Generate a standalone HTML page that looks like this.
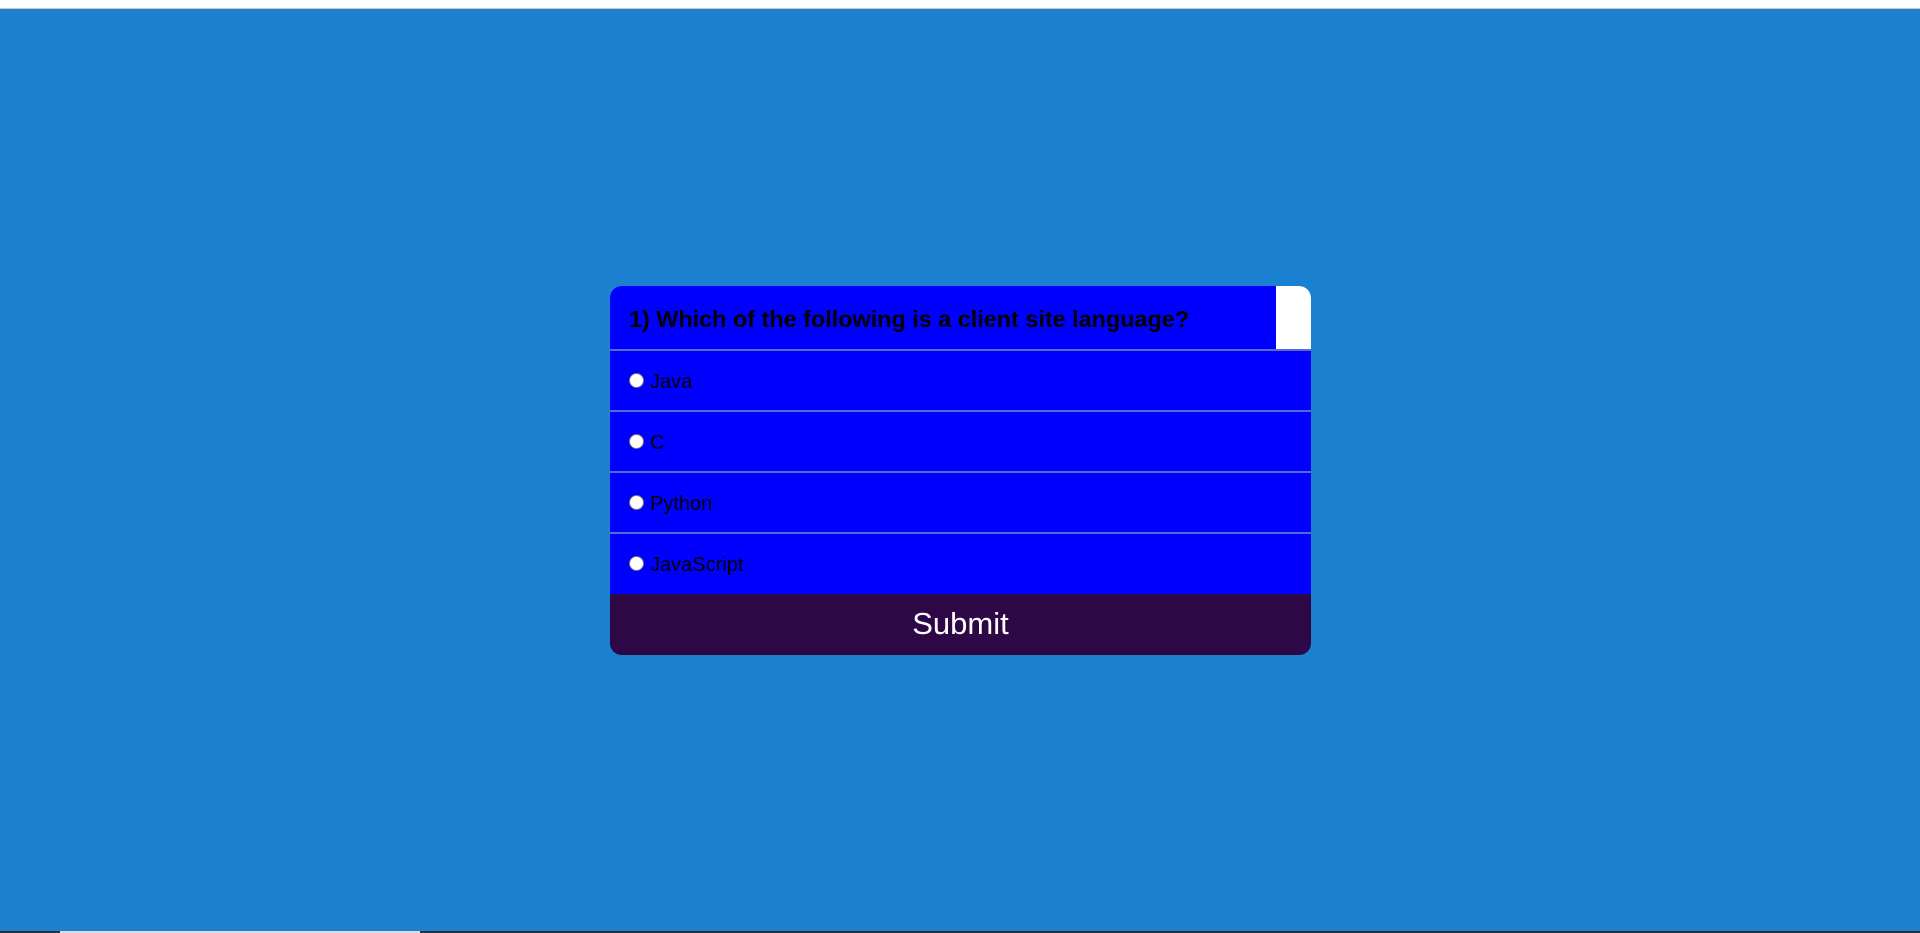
<!DOCTYPE html>
<html><head><style>
html,body{margin:0;padding:0;}
body{width:1920px;height:933px;background:#1a80cf;position:relative;overflow:hidden;font-family:"Liberation Sans",Arial,sans-serif;}
.top{position:absolute;left:0;top:0;width:1920px;height:8px;background:#fff;border-bottom:1px solid #c8c8c8;}
.bot{position:absolute;left:0;top:931px;width:1920px;height:2px;background:#263238;}
.bot i{position:absolute;left:60px;top:0;width:360px;height:2px;background:#ddd;}
.card{position:absolute;left:610px;top:286px;width:701px;height:369px;border-radius:12px;overflow:hidden;background:#0000ff;}
.q{position:relative;height:63px;border-bottom:2px solid #5a6ad0;box-sizing:content-box;}
.q span{position:absolute;left:19px;top:20px;font-weight:bold;font-size:23.4px;color:#000;}
.q .w{position:absolute;right:0;top:0;width:35px;height:63px;background:#fff;}
.o{height:59px;border-bottom:2px solid #5a6ad0;position:relative;}
.o.last{border-bottom:none;height:59px;}
.o .r{position:absolute;left:19px;top:22px;width:15px;height:15px;border-radius:50%;background:#fff;border:1px solid #777;box-sizing:border-box;}
.o span{position:absolute;left:40px;top:20px;font-size:20px;color:#000;}
.s{position:absolute;left:0;top:308px;width:701px;height:61px;background:#2e0846;color:#fff;font-size:31px;text-align:center;line-height:60px;}
</style></head><body>
<div class="top"></div>
<div class="card">
<div class="q"><span>1) Which of the following is a client site language?</span><div class="w"></div></div>
<div class="o"><div class="r"></div><span>Java</span></div>
<div class="o"><div class="r"></div><span>C</span></div>
<div class="o"><div class="r"></div><span>Python</span></div>
<div class="o last"><div class="r"></div><span>JavaScript</span></div>
<div class="s">Submit</div>
</div>
<div class="bot"><i></i></div>
</body></html>
